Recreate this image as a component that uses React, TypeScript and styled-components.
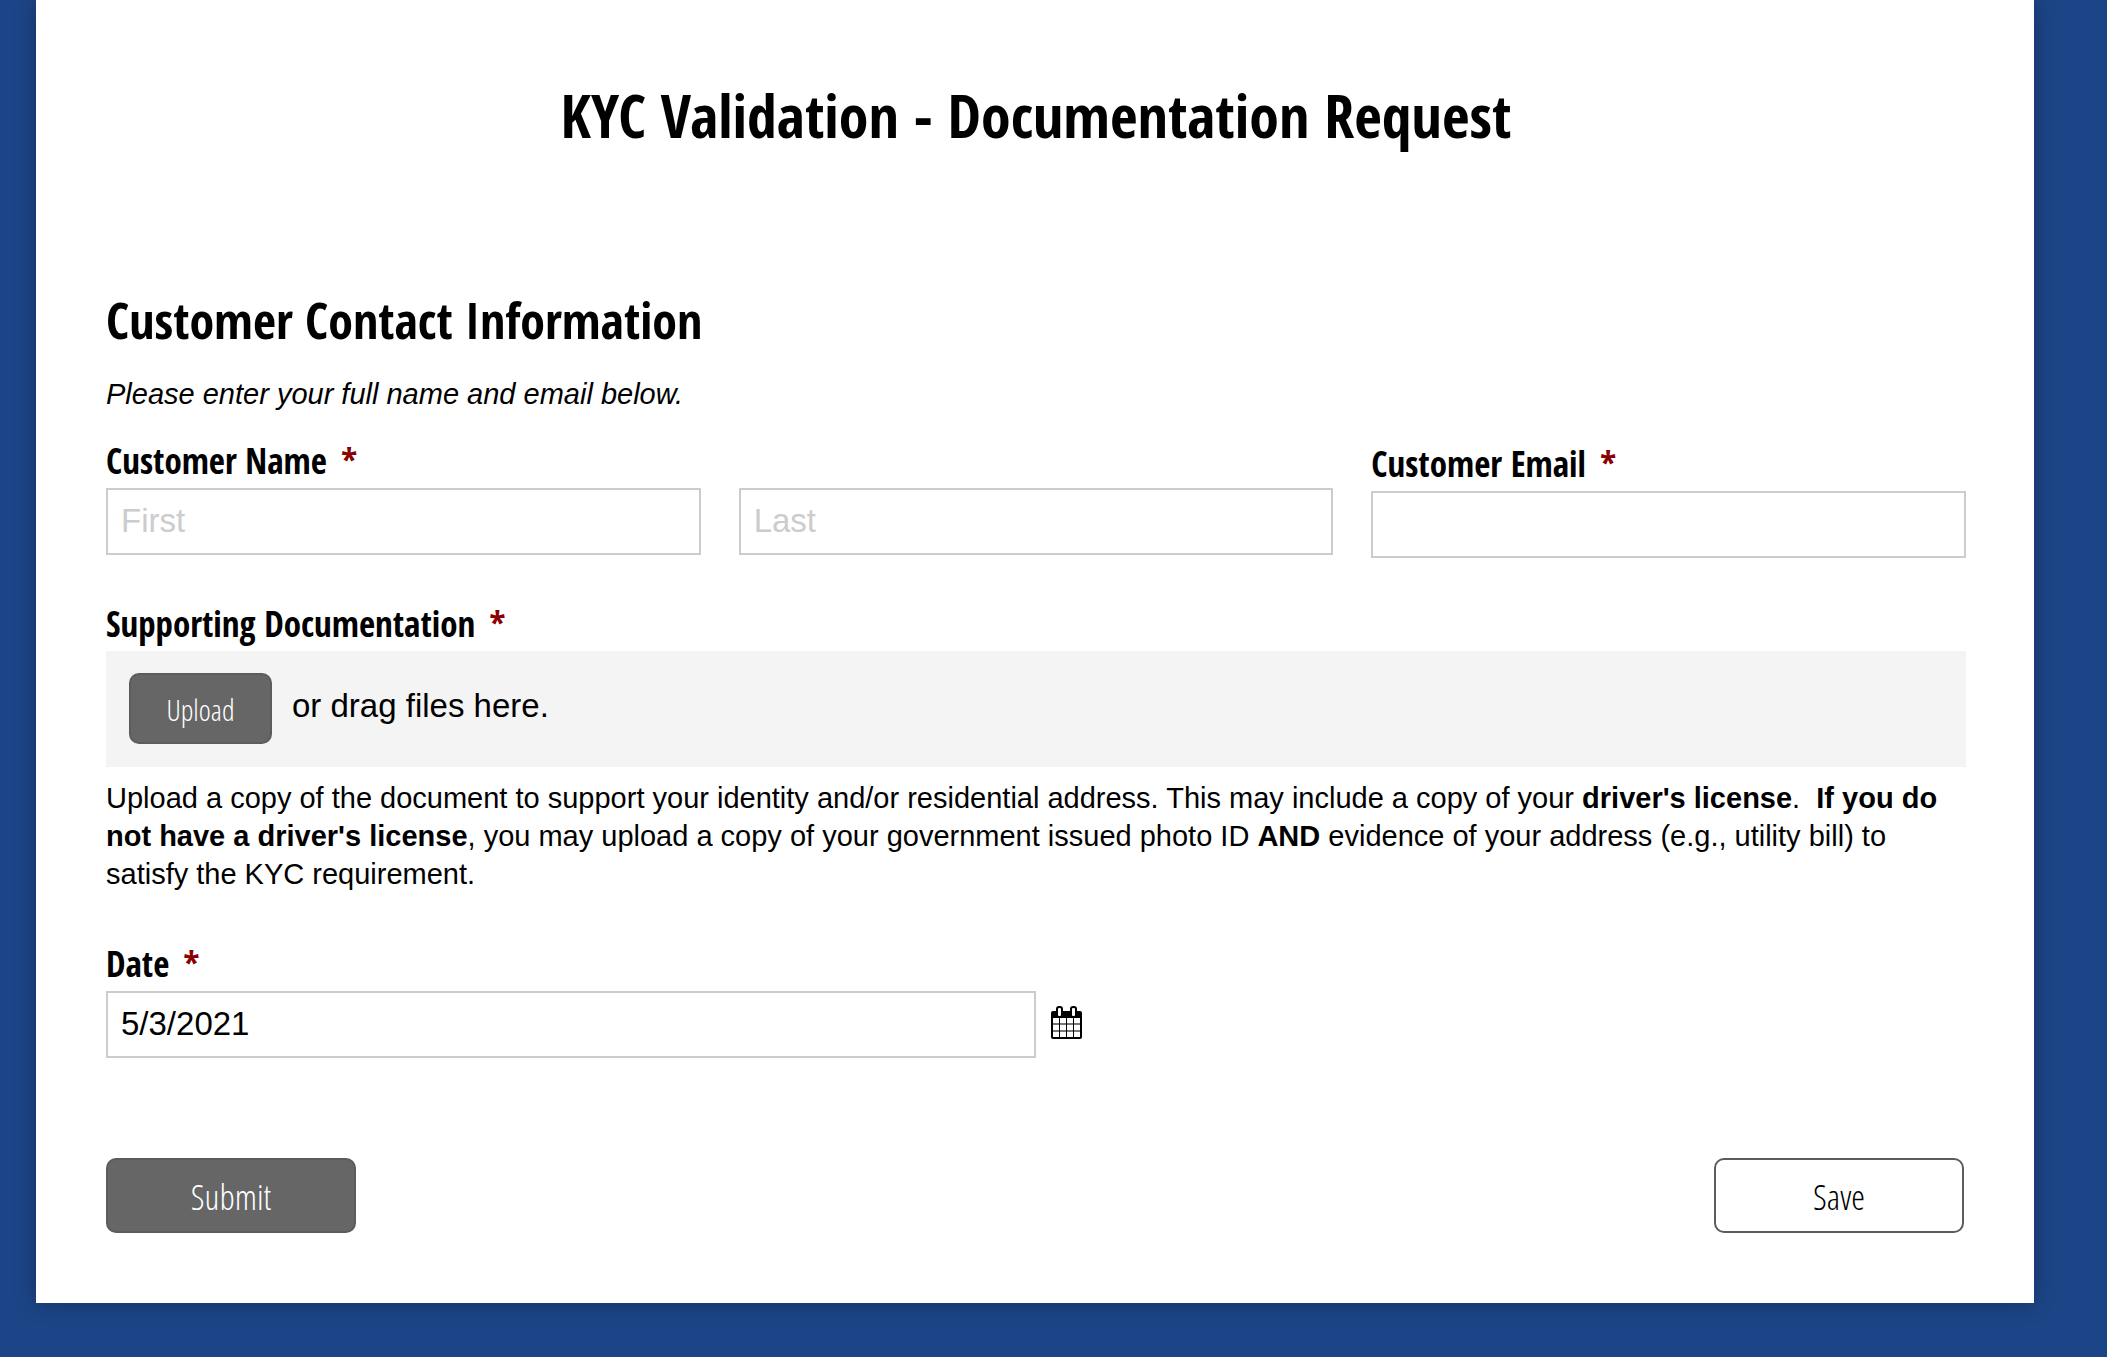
import React, { useState } from "react";
import styled, { createGlobalStyle } from "styled-components";

const condensed = `"Open Sans Condensed", "Open Sans", sans-serif`;
const condensedLight = `"Open Sans Condensed Light", "OpenSans-CondensedLight", "Open Sans Light Condensed", "Open Sans Condensed", sans-serif`;
const sans = `"Liberation Sans", Arial, sans-serif`;

const GlobalStyle = createGlobalStyle`
  *, *::before, *::after { box-sizing: border-box; }
  body {
    margin: 0;
    background: #1c4587;
    color: #000;
    font-family: ${sans};
    font-size: 29px;
    line-height: 38px;
  }
`;

const Page = styled.main`
  padding: 0 73px 54px 36px;
`;

const Card = styled.form`
  display: flex;
  flex-direction: column;
  padding: 74px 68px 70px 70px;
  background: #fff;
  box-shadow: 0 0 20px rgba(0, 0, 0, 0.3);
`;

const Title = styled.h1`
  margin: 0;
  font-family: ${condensed};
  font-size: 60px;
  font-weight: 700;
  line-height: 82px;
  text-align: center;
`;

const Section = styled.section`
  display: flex;
  flex-direction: column;
  margin-top: 130px;
`;

const SectionTitle = styled.h2`
  margin: 0;
  font-family: ${condensed};
  font-size: 50px;
  font-weight: 700;
  line-height: 68px;
`;

const SectionHint = styled.p`
  margin: 21px 0 0;
  font-style: italic;
`;

const NameRow = styled.div`
  display: grid;
  grid-template-columns: repeat(3, minmax(0, 1fr));
  column-gap: 38px;
  margin-top: 24px;
`;

const NameGroup = styled.fieldset`
  grid-column: span 2;
  min-width: 0;
  margin: 0;
  padding: 0;
  border: 0;
`;

const NameInputs = styled.div`
  display: grid;
  grid-template-columns: repeat(2, minmax(0, 1fr));
  column-gap: 38px;
`;

const Field = styled.div<{ $top?: number }>`
  margin-top: ${(p) => p.$top ?? 0}px;
`;

const labelText = `
  display: block;
  padding: 0 0 3px;
  font-family: ${condensed};
  font-size: 35px;
  font-weight: 700;
  line-height: 48px;
`;

const Label = styled.label`
  ${labelText}
`;

const Legend = styled.legend`
  ${labelText}
`;

const Star = styled.span`
  margin-left: 14px;
  color: #8b0000;
`;

const TextInput = styled.input`
  display: block;
  width: 100%;
  height: 67px;
  padding: 0 13px 2px;
  border: 2px solid #ccc;
  border-radius: 0;
  background: #fff;
  color: #000;
  font-family: ${sans};
  font-size: 33px;

  &::placeholder {
    color: #ccc;
    opacity: 1;
  }
`;

const DropZone = styled.div`
  display: flex;
  align-items: center;
  gap: 20px;
  padding: 22px 23px 23px;
  background: #f4f4f4;
`;

const DropHint = styled.span`
  padding-bottom: 5px;
  font-size: 33px;
`;

const Button = styled.button<{ $small?: boolean; $outline?: boolean }>`
  width: ${(p) => (p.$small ? 143 : 250)}px;
  height: ${(p) => (p.$small ? 71 : 75)}px;
  padding: 2px 0 0;
  border: 2px solid #5c5c5c;
  border-radius: 10px;
  background: ${(p) => (p.$outline ? "#fff" : "#666")};
  color: ${(p) => (p.$outline ? "#000" : "#fff")};
  font-family: ${condensedLight};
  font-size: ${(p) => (p.$small ? 29 : 35)}px;
  font-weight: 300;
  cursor: pointer;
`;

const Help = styled.p`
  margin: 12px 0 0;
`;

const DateRow = styled.div`
  display: flex;
  align-items: center;
  gap: 15px;
`;

const DateBox = styled.div`
  width: 50%;
`;

const IconButton = styled.button`
  display: flex;
  padding: 0 0 4px;
  border: 0;
  background: none;
  cursor: pointer;
`;

const Actions = styled.div`
  display: flex;
  justify-content: space-between;
  margin-top: 100px;
  padding-right: 2px;
`;

const Required = () => <Star aria-hidden="true">*</Star>;

const CalendarIcon = () => (
  <svg width="31" height="34" viewBox="0 0 31 34" aria-hidden="true">
    <path d="M2 5h27a2 2 0 0 1 2 2v24a2 2 0 0 1-2 2H2a2 2 0 0 1-2-2V7a2 2 0 0 1 2-2z" fill="#000" />
    <path d="M2 12h27v19H2z" fill="#fff" />
    <path d="M2 18h27M2 25h27" stroke="#777" strokeWidth="2" />
    <path d="M8.500 12v19M15.500 12v19M22.500 12v19" stroke="#000" strokeWidth="1" />
    <rect x="5" y="0" width="7" height="11" rx="3" fill="#000" />
    <rect x="19" y="0" width="7" height="11" rx="3" fill="#000" />
    <rect x="7" y="2" width="3" height="8" rx="1" fill="#fff" />
    <rect x="21" y="2" width="3" height="8" rx="1" fill="#fff" />
  </svg>
);

export default function App() {
  const [date, setDate] = useState("5/3/2021");
  return (
    <>
      <GlobalStyle />
      <Page>
        <Card onSubmit={(e) => e.preventDefault()}>
          <Title>KYC Validation - Documentation Request</Title>
          <Section>
            <SectionTitle>Customer Contact Information</SectionTitle>
            <SectionHint>Please enter your full name and email below.</SectionHint>
            <NameRow>
              <NameGroup>
                <Legend>Customer Name<Required /></Legend>
                <NameInputs>
                  <TextInput aria-label="First" placeholder="First" />
                  <TextInput aria-label="Last" placeholder="Last" />
                </NameInputs>
              </NameGroup>
              <Field $top={3}>
                <Label htmlFor="email">Customer Email<Required /></Label>
                <TextInput id="email" type="email" />
              </Field>
            </NameRow>
            <Field $top={42}>
              <Label htmlFor="upload">Supporting Documentation<Required /></Label>
              <DropZone>
                <Button id="upload" type="button" $small>Upload</Button>
                <DropHint>or drag files here.</DropHint>
              </DropZone>
              <Help>
                Upload a copy of the document to support your identity and/or residential address. This may
                include a copy of your <b>driver's license</b>. &nbsp;<b>If you do not have a driver's
                license</b>, you may upload a copy of your government issued photo ID <b>AND</b> evidence of
                your address (e.g., utility bill) to satisfy the KYC requirement.
              </Help>
            </Field>
            <Field $top={47}>
              <Label htmlFor="date">Date<Required /></Label>
              <DateRow>
                <DateBox>
                  <TextInput id="date" value={date} onChange={(e) => setDate(e.target.value)} />
                </DateBox>
                <IconButton type="button" aria-label="Choose date">
                  <CalendarIcon />
                </IconButton>
              </DateRow>
            </Field>
          </Section>
          <Actions>
            <Button type="submit">Submit</Button>
            <Button type="button" $outline>Save</Button>
          </Actions>
        </Card>
      </Page>
    </>
  );
}
